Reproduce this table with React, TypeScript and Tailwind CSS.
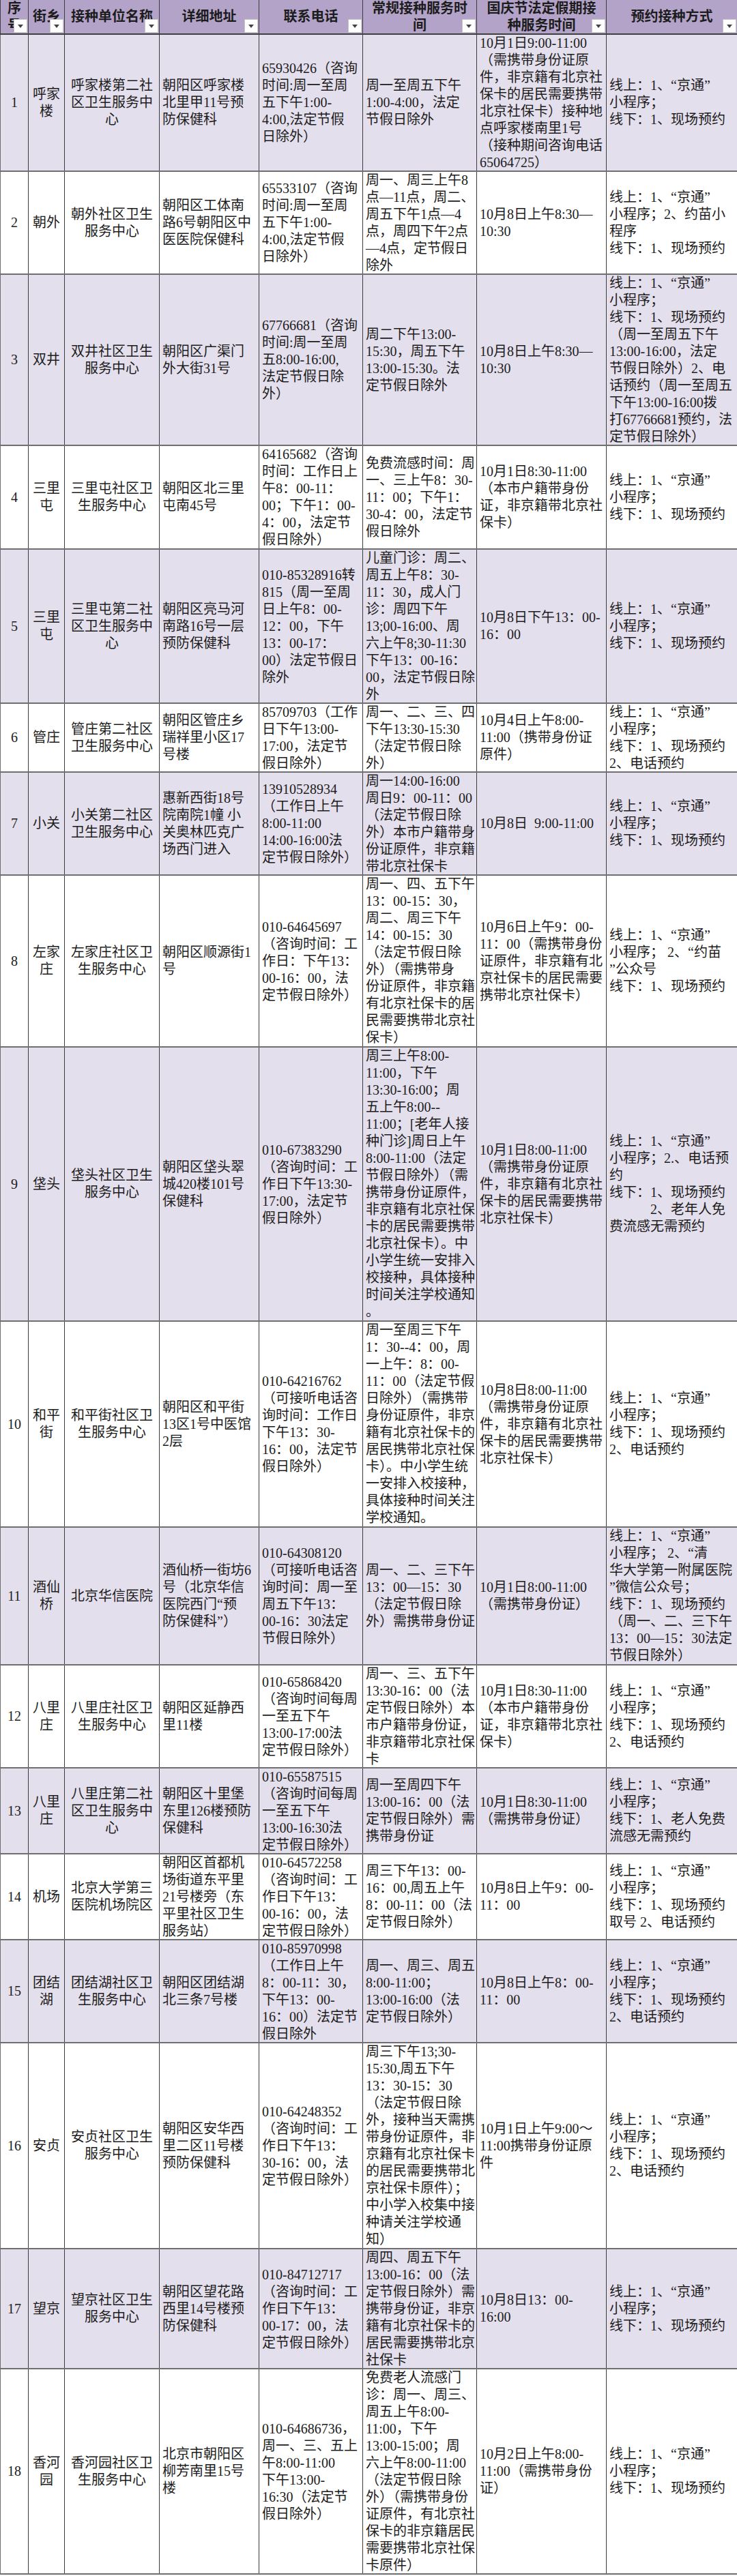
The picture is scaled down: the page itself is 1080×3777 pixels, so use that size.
import React from "react";

type Row = {
  h: string;
  seq: string;
  street: string[];
  unit: string[];
  addr: string[];
  phone: string[];
  regular: string[];
  holiday: string[];
  booking: string[];
};

const GRID = "grid grid-cols-[41px_53px_139px_146px_152px_167px_190px_192px]";

const rows: Row[] = [
  {
    h: "h-[201px]",
    seq: "1",
    street: ["呼家", "楼"],
    unit: ["呼家楼第二社", "区卫生服务中", "心"],
    addr: ["朝阳区呼家楼", "北里甲11号预", "防保健科"],
    phone: ["65930426（咨询", "时间:周一至周", "五下午1:00-", "4:00,法定节假", "日除外）"],
    regular: ["周一至周五下午", "1:00-4:00，法定", "节假日除外"],
    holiday: [
      "10月1日9:00-11:00",
      "（需携带身份证原",
      "件，非京籍有北京社",
      "保卡的居民需要携带",
      "北京社保卡）接种地",
      "点呼家楼南里1号",
      "（接种期间咨询电话",
      "65064725）",
    ],
    booking: ["线上：1、“京通”", "小程序；", "线下：1、现场预约"],
  },
  {
    h: "h-[151px]",
    seq: "2",
    street: ["朝外"],
    unit: ["朝外社区卫生", "服务中心"],
    addr: ["朝阳区工体南", "路6号朝阳区中", "医医院保健科"],
    phone: ["65533107（咨询", "时间:周一至周", "五下午1:00-", "4:00,法定节假", "日除外）"],
    regular: ["周一、周三上午8", "点—11点，周二、", "周五下午1点—4", "点，周四下午2点", "—4点，定节假日", "除外"],
    holiday: ["10月8日上午8:30—", "10:30"],
    booking: ["线上：1、“京通”", "小程序；2、约苗小", "程序", "线下：1、现场预约"],
  },
  {
    h: "h-[251px]",
    seq: "3",
    street: ["双井"],
    unit: ["双井社区卫生", "服务中心"],
    addr: ["朝阳区广渠门", "外大街31号"],
    phone: ["67766681（咨询", "时间:周一至周", "五8:00-16:00,", "法定节假日除", "外）"],
    regular: ["周二下午13:00-", "15:30，周五下午", "13:00-15:30。法", "定节假日除外"],
    holiday: ["10月8日上午8:30—", "10:30"],
    booking: [
      "线上：1、“京通”",
      "小程序；",
      "线下：1、现场预约",
      "（周一至周五下午",
      "13:00-16:00，法定",
      "节假日除外）2、电",
      "话预约（周一至周五",
      "下午13:00-16:00拨",
      "打67766681预约，法",
      "定节假日除外）",
    ],
  },
  {
    h: "h-[152px]",
    seq: "4",
    street: ["三里", "屯"],
    unit: ["三里屯社区卫", "生服务中心"],
    addr: ["朝阳区北三里", "屯南45号"],
    phone: ["64165682（咨询", "时间：工作日上", "午8：00-11：", "00；下午1：00-", "4：00，法定节", "假日除外）"],
    regular: ["免费流感时间：周", "一、三上午8：30-", "11：00；下午1：", "30-4：00，法定节", "假日除外"],
    holiday: ["10月1日8:30-11:00", "（本市户籍带身份", "证，非京籍带北京社", "保卡）"],
    booking: ["线上：1、“京通”", "小程序；", "线下：1、现场预约"],
  },
  {
    h: "h-[226px]",
    seq: "5",
    street: ["三里", "屯"],
    unit: ["三里屯第二社", "区卫生服务中", "心"],
    addr: ["朝阳区亮马河", "南路16号一层", "预防保健科"],
    phone: ["010-85328916转", "815（周一至周", "日上午8：00-", "12：00，下午", "13：00-17：", "00）法定节假日", "除外"],
    regular: [
      "儿童门诊：周二、",
      "周五上午8：30-",
      "11：30，成人门",
      "诊：周四下午",
      "13;00-16:00、周",
      "六上午8;30-11:30",
      "下午13：00-16：",
      "00，法定节假日除",
      "外",
    ],
    holiday: ["10月8日下午13：00-", "16：00"],
    booking: ["线上：1、“京通”", "小程序；", "线下：1、现场预约"],
  },
  {
    h: "h-[101px]",
    seq: "6",
    street: ["管庄"],
    unit: ["管庄第二社区", "卫生服务中心"],
    addr: ["朝阳区管庄乡", "瑞祥里小区17", "号楼"],
    phone: ["85709703（工作", "日下午13:00-", "17:00，法定节", "假日除外）"],
    regular: ["周一、二、三、四", "下午13:30-15:30", "（法定节假日除", "外）"],
    holiday: ["10月4日上午8:00-", "11:00（携带身份证", "原件）"],
    booking: ["线上：1、“京通”", "小程序；", "线下：1、现场预约", "2、电话预约"],
  },
  {
    h: "h-[151px]",
    seq: "7",
    street: ["小关"],
    unit: ["小关第二社区", "卫生服务中心"],
    addr: ["惠新西街18号", "院南院1幢 小", "关奥林匹克广", "场西门进入"],
    phone: ["13910528934", "（工作日上午", "8:00-11:00", "14:00-16:00法", "定节假日除外）"],
    regular: ["周一14:00-16:00", "周日9：00-11：00", "（法定节假日除", "外）本市户籍带身", "份证原件，非京籍", "带北京社保卡"],
    holiday: ["10月8日  9:00-11:00"],
    booking: ["线上：1、“京通”", "小程序；", "线下：1、现场预约"],
  },
  {
    h: "h-[252px]",
    seq: "8",
    street: ["左家", "庄"],
    unit: ["左家庄社区卫", "生服务中心"],
    addr: ["朝阳区顺源街1", "号"],
    phone: ["010-64645697", "（咨询时间：工", "作日：下午13：", "00-16：00，法", "定节假日除外）"],
    regular: [
      "周一、四、五下午",
      "13：00-15：30，",
      "周二、周三下午",
      "14：00-15：30",
      "（法定节假日除",
      "外）（需携带身",
      "份证原件，非京籍",
      "有北京社保卡的居",
      "民需要携带北京社",
      "保卡）",
    ],
    holiday: ["10月6日上午9：00-", "11：00（需携带身份", "证原件，非京籍有北", "京社保卡的居民需要", "携带北京社保卡）"],
    booking: ["线上：1、“京通”", "小程序； 2、“约苗", "”公众号", "线下：1、现场预约"],
  },
  {
    h: "h-[402px]",
    seq: "9",
    street: ["垡头"],
    unit: ["垡头社区卫生", "服务中心"],
    addr: ["朝阳区垡头翠", "城420楼101号", "保健科"],
    phone: ["010-67383290", "（咨询时间：工", "作日下午13:30-", "17:00，法定节", "假日除外）"],
    regular: [
      "周三上午8:00-",
      "11:00，下午",
      "13:30-16:00；周",
      "五上午8:00--",
      "11:00；[老年人接",
      "种门诊]周日上午",
      "8:00-11:00（法定",
      "节假日除外）（需",
      "携带身份证原件，",
      "非京籍有北京社保",
      "卡的居民需要携带",
      "北京社保卡）。中",
      "小学生统一安排入",
      "校接种，具体接种",
      "时间关注学校通知",
      "。",
    ],
    holiday: ["10月1日8:00-11:00", "（需携带身份证原", "件，非京籍有北京社", "保卡的居民需要携带", "北京社保卡）"],
    booking: ["线上：1、“京通”", "小程序；2.、电话预", "约", "线下：1、现场预约", "\u3000\u3000\u30002、老年人免", "费流感无需预约"],
  },
  {
    h: "h-[302px]",
    seq: "10",
    street: ["和平", "街"],
    unit: ["和平街社区卫", "生服务中心"],
    addr: ["朝阳区和平街", "13区1号中医馆", "2层"],
    phone: ["010-64216762", "（可接听电话咨", "询时间：工作日", "下午13：30-", "16：00，法定节", "假日除外）"],
    regular: [
      "周一至周三下午",
      "1：30--4：00，周",
      "一上午：8：00-",
      "11：00（法定节假",
      "日除外）（需携带",
      "身份证原件，非京",
      "籍有北京社保卡的",
      "居民携带北京社保",
      "卡）。中小学生统",
      "一安排入校接种，",
      "具体接种时间关注",
      "学校通知。",
    ],
    holiday: ["10月8日8:00-11:00", "（需携带身份证原", "件，非京籍有北京社", "保卡的居民需要携带", "北京社保卡）"],
    booking: ["线上：1、“京通”", "小程序；", "线下：1、现场预约", "2、电话预约"],
  },
  {
    h: "h-[202px]",
    seq: "11",
    street: ["酒仙", "桥"],
    unit: ["北京华信医院"],
    addr: ["酒仙桥一街坊6", "号（北京华信", "医院西门“预", "防保健科”）"],
    phone: ["010-64308120", "（可接听电话咨", "询时间：周一至", "周五下午13：", "00-16：30法定", "节假日除外）"],
    regular: ["周一、二、三下午", "13：00—15：30", "（法定节假日除", "外）需携带身份证"],
    holiday: ["10月1日8:00-11:00", "（需携带身份证）"],
    booking: [
      "线上：1、“京通”",
      "小程序； 2、“清",
      "华大学第一附属医院",
      "”微信公众号；",
      "线下：1、现场预约",
      "（周一、二、三下午",
      "13：00—15：30法定",
      "节假日除外）",
    ],
  },
  {
    h: "h-[151px]",
    seq: "12",
    street: ["八里", "庄"],
    unit: ["八里庄社区卫", "生服务中心"],
    addr: ["朝阳区延静西", "里11楼"],
    phone: ["010-65868420", "（咨询时间每周", "一至五下午", "13:00-17:00法", "定节假日除外）"],
    regular: ["周一、三、五下午", "13:30-16：00（法", "定节假日除外）本", "市户籍带身份证，", "非京籍带北京社保", "卡"],
    holiday: ["10月1日8:30-11:00", "（本市户籍带身份", "证，非京籍带北京社", "保卡）"],
    booking: ["线上：1、“京通”", "小程序；", "线下：1、现场预约", "2、电话预约"],
  },
  {
    h: "h-[126px]",
    seq: "13",
    street: ["八里", "庄"],
    unit: ["八里庄第二社", "区卫生服务中", "心"],
    addr: ["朝阳区十里堡", "东里126楼预防", "保健科"],
    phone: ["010-65587515", "（咨询时间每周", "一至五下午", "13:00-16:30法", "定节假日除外）"],
    regular: ["周一至周四下午", "13:00-16：00（法", "定节假日除外）需", "携带身份证"],
    holiday: ["10月1日8:30-11:00", "（需携带身份证）"],
    booking: ["线上：1、“京通”", "小程序；", "线下：1、老人免费", "流感无需预约"],
  },
  {
    h: "h-[126px]",
    seq: "14",
    street: ["机场"],
    unit: ["北京大学第三", "医院机场院区"],
    addr: ["朝阳区首都机", "场街道东平里", "21号楼旁（东", "平里社区卫生", "服务站）"],
    phone: ["010-64572258", "（咨询时间：工", "作日下午13：", "00-16：00，法", "定节假日除外）"],
    regular: ["周三下午13：00-", "16：00,周五上午", "8：00-11：00（法", "定节假日除外）"],
    holiday: ["10月8日上午9：00-", "11：00"],
    booking: ["线上：1、“京通”", "小程序；", "线下：1、现场预约", "取号 2、电话预约"],
  },
  {
    h: "h-[151px]",
    seq: "15",
    street: ["团结", "湖"],
    unit: ["团结湖社区卫", "生服务中心"],
    addr: ["朝阳区团结湖", "北三条7号楼"],
    phone: ["010-85970998", "（工作日上午", "8：00-11：30，", "下午13：00-", "16：00）法定节", "假日除外"],
    regular: ["周一、周三、周五", "8:00-11:00；", "13:00-16:00（法", "定节假日除外）"],
    holiday: ["10月8日上午8：00-", "11：00"],
    booking: ["线上：1、“京通”", "小程序；", "线下：1、现场预约", "2、电话预约"],
  },
  {
    h: "h-[302px]",
    seq: "16",
    street: ["安贞"],
    unit: ["安贞社区卫生", "服务中心"],
    addr: ["朝阳区安华西", "里二区11号楼", "预防保健科"],
    phone: ["010-64248352", "（咨询时间：工", "作日下午13：", "30-16：00，法", "定节假日除外）"],
    regular: [
      "周三下午13;30-",
      "15:30,周五下午",
      "13：30-15：30",
      "（法定节假日除",
      "外，接种当天需携",
      "带身份证原件，非",
      "京籍有北京社保卡",
      "的居民需要携带北",
      "京社保卡原件）；",
      "中小学入校集中接",
      "种请关注学校通",
      "知）",
    ],
    holiday: ["10月1日上午9:00～", "11:00携带身份证原", "件"],
    booking: ["线上：1、“京通”", "小程序；", "线下：1、现场预约", "2、电话预约"],
  },
  {
    h: "h-[176px]",
    seq: "17",
    street: ["望京"],
    unit: ["望京社区卫生", "服务中心"],
    addr: ["朝阳区望花路", "西里14号楼预", "防保健科"],
    phone: ["010-84712717", "（咨询时间：工", "作日下午13：", "00-17：00，法", "定节假日除外）"],
    regular: ["周四、周五下午", "13:00-16：00（法", "定节假日除外）需", "携带身份证，非京", "籍有北京社保卡的", "居民需要携带北京", "社保卡"],
    holiday: ["10月8日13：00-", "16:00"],
    booking: ["线上：1、“京通”", "小程序；", "线下：1、现场预约"],
  },
  {
    h: "h-[301px]",
    seq: "18",
    street: ["香河", "园"],
    unit: ["香河园社区卫", "生服务中心"],
    addr: ["北京市朝阳区", "柳芳南里15号", "楼"],
    phone: ["010-64686736，", "周一、三、五上", "午8:00-11:00", "下午13:00-", "16:30（法定节", "假日除外）"],
    regular: [
      "免费老人流感门",
      "诊：周一、周三、",
      "周五上午8:00-",
      "11:00，下午",
      "13:00-15:00；周",
      "六上午8:00-11:00",
      "（法定节假日除",
      "外）（需携带身份",
      "证原件，有北京社",
      "保卡的非京籍居民",
      "需要携带北京社保",
      "卡原件）",
    ],
    holiday: ["10月2日上午8:00-", "11:00（需携带身份", "证）"],
    booking: ["线上：1、“京通”", "小程序；", "线下：1、现场预约"],
  },
];

function Cell({ lines, center }: { lines: string[]; center?: boolean }) {
  return (
    <div
      className={`flex flex-col justify-center overflow-hidden border-r border-[#3c3c3c] px-[4px] ${
        center ? "items-center text-center" : "items-start text-left"
      }`}
    >
      {lines.map((l, i) => (
        <div key={i} className="whitespace-pre leading-[25px]">
          {l}
        </div>
      ))}
    </div>
  );
}

function FilterButton() {
  return (
    <span className="absolute bottom-[1px] right-[1px] flex h-[20px] w-[20px] items-center justify-center border border-[#c6c6c6] bg-white">
      <svg width="8" height="7" viewBox="0 0 8 7" className="mt-[3px]">
        <path d="M0 0H8L4 5Z" fill="#444" />
      </svg>
    </span>
  );
}

function HeadCell({ lines }: { lines: string[] }) {
  return (
    <div className="relative flex flex-col items-center justify-center overflow-hidden border-r border-[#3c3c3c] text-center font-bold">
      {lines.map((l, i) => (
        <div key={i} className="whitespace-pre leading-[25px]">
          {l}
        </div>
      ))}
      <FilterButton />
    </div>
  );
}

export default function App() {
  return (
    <div className="w-[1080px] bg-white font-['Liberation_Serif','Noto_Sans_CJK_SC',serif] text-[20px] text-[#1c1c1c]">
      <div className={`${GRID} h-[51px] border-b-2 border-l border-[#404040] bg-[#b3a3c9]`}>
        <HeadCell lines={["序", "号"]} />
        <HeadCell lines={["街乡"]} />
        <HeadCell lines={["接种单位名称"]} />
        <HeadCell lines={["详细地址"]} />
        <HeadCell lines={["联系电话"]} />
        <HeadCell lines={["常规接种服务时", "间"]} />
        <HeadCell lines={["国庆节法定假期接", "种服务时间"]} />
        <HeadCell lines={["预约接种方式"]} />
      </div>
      {rows.map((r, i) => (
        <div
          key={r.seq}
          className={`${GRID} ${r.h} border-b-2 border-l border-[#6f6f6f] ${
            i % 2 === 0 ? "bg-[#e4dfec]" : "bg-white"
          }`}
        >
          <Cell lines={[r.seq]} center />
          <Cell lines={r.street} center />
          <Cell lines={r.unit} center />
          <Cell lines={r.addr} />
          <Cell lines={r.phone} />
          <Cell lines={r.regular} />
          <Cell lines={r.holiday} />
          <Cell lines={r.booking} />
        </div>
      ))}
    </div>
  );
}
